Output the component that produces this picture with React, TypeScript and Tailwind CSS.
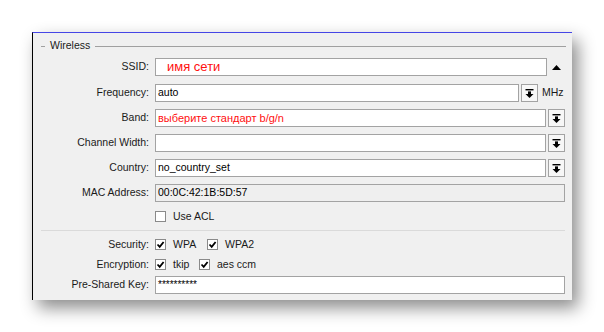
import type { ReactNode } from "react";

const font = { fontFamily: '"Liberation Sans", Arial, sans-serif' };

function Row({ label, children, className = "" }: { label: string; children: ReactNode; className?: string }) {
  return (
    <div className={`flex items-center ${className}`}>
      <div className="w-[116px] shrink-0 text-right text-[10.5px] text-[#1a1a1a]">{label}</div>
      <div className="ml-[6px] flex items-center">{children}</div>
    </div>
  );
}

function Field({ value, width, className = "", gray = false }: { value?: ReactNode; width: number; className?: string; gray?: boolean }) {
  return (
    <div
      className={`flex h-[18px] items-center border border-[#a3a3a3] px-[2px] text-[10.5px] text-black ${gray ? "bg-[#efefef]" : "bg-white"} ${className}`}
      style={{ width }}
    >
      {value}
    </div>
  );
}

function DropButton() {
  return (
    <div className="ml-[2px] flex h-[18px] w-[17px] items-center justify-center border border-[#a3a3a3] bg-[#f7f7f7]">
      <svg width="9" height="9" viewBox="0 0 9 9" fill="black">
        <rect x="0.5" y="0" width="8" height="1.4" />
        <rect x="3" y="2.4" width="3" height="2.6" />
        <polygon points="0.5,5 8.5,5 4.5,9" />
      </svg>
    </div>
  );
}

function Check({ checked = false }: { checked?: boolean }) {
  return (
    <div className="flex h-[11px] w-[11px] shrink-0 items-center justify-center border border-[#8a8a8a] bg-white">
      {checked && (
        <svg width="9" height="9" viewBox="0 0 9 9">
          <path d="M1.5 4.5 L3.7 6.8 L7.6 2" fill="none" stroke="black" strokeWidth="1.8" />
        </svg>
      )}
    </div>
  );
}

function CheckLabel({ text, checked, className = "" }: { text: string; checked?: boolean; className?: string }) {
  return (
    <div className={`flex items-center ${className}`}>
      <Check checked={checked} />
      <span className="ml-[7px] text-[10.5px] text-[#1a1a1a]">{text}</span>
    </div>
  );
}

export default function App() {
  return (
    <div className="h-[332px] w-[604px] bg-white pl-[32px] pt-[32px]" style={font}>
      <div className="flex h-[268px] w-[540px] flex-col border-l border-t border-l-black border-t-[#4646e6] bg-[#f0f0f0] pt-[6px] shadow-[6px_8px_16px_rgba(0,0,0,0.45)]">
        {/* Wireless header */}
        <div className="flex h-[14px] items-center pl-[8px]">
          <div className="h-px w-[4px] bg-[#a0a0a0]" />
          <span className="ml-[5px] text-[10.5px] text-[#1a1a1a]">Wireless</span>
          <div className="ml-[5px] h-px w-[471px] bg-[#a0a0a0]" />
        </div>

        <Row label="SSID:" className="mt-[5px]">
          <Field width={392} value={<span className="pl-[9px] text-[13px] text-[#ff1010]">имя сети</span>} />
          <svg className="ml-[5px]" width="9" height="5" viewBox="0 0 9 5">
            <polygon points="0,5 9,5 4.5,0" fill="black" />
          </svg>
        </Row>

        <Row label="Frequency:" className="mt-[8px]">
          <Field width={364} value="auto" />
          <DropButton />
          <span className="ml-[4px] text-[10.5px] text-[#1a1a1a]">MHz</span>
        </Row>

        <Row label="Band:" className="mt-[7px]">
          <Field width={391} value={<span className="text-[11px] text-[#ff1010]">выберите стандарт b/g/n</span>} />
          <DropButton />
        </Row>

        <Row label="Channel Width:" className="mt-[7px]">
          <Field width={391} />
          <DropButton />
        </Row>

        <Row label="Country:" className="mt-[7px]">
          <Field width={391} value="no_country_set" />
          <DropButton />
        </Row>

        <Row label="MAC Address:" className="mt-[7px]">
          <Field width={410} gray value="00:0C:42:1B:5D:57" />
        </Row>

        <Row label="" className="mt-[9px] h-[11px]">
          <CheckLabel text="Use ACL" />
        </Row>

        <div className="ml-[8px] mt-[8px] h-px w-[524px] bg-[#dadada]" />

        <Row label="Security:" className="mt-[8px] h-[11px]">
          <CheckLabel text="WPA" checked className="w-[52px]" />
          <CheckLabel text="WPA2" checked />
        </Row>

        <Row label="Encryption:" className="mt-[9px] h-[11px]">
          <CheckLabel text="tkip" checked className="w-[44px]" />
          <CheckLabel text="aes ccm" checked />
        </Row>

        <Row label="Pre-Shared Key:" className="mt-[6px]">
          <Field width={410} value={<span className="text-[10px] leading-none">**********</span>} />
        </Row>
      </div>
    </div>
  );
}
